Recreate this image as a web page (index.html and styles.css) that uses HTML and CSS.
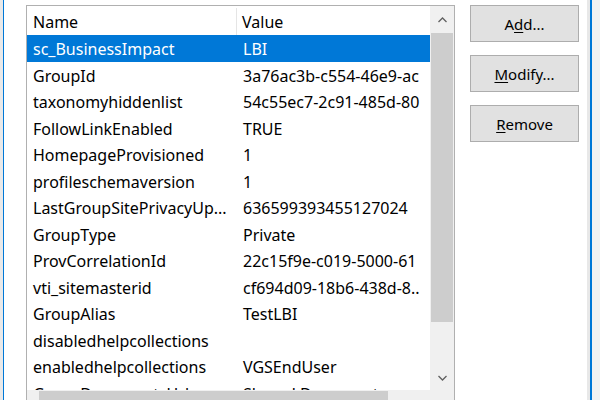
FILE: index.html
```html
<!DOCTYPE html>
<html>
<head>
<meta charset="utf-8">
<link rel="stylesheet" href="styles.css">
</head>
<body>
<div class="window">
  <div class="edge-l"></div>
  <div class="page">
    <div class="listbox">
      <div class="rows">
        <div class="row head"><div class="c-name">Name</div><div class="c-val">Value</div></div>
        <div class="row sel"><div class="c-name">sc_BusinessImpact</div><div class="c-val">LBI</div></div>
        <div class="row"><div class="c-name">GroupId</div><div class="c-val">3a76ac3b-c554-46e9-ac</div></div>
        <div class="row"><div class="c-name">taxonomyhiddenlist</div><div class="c-val">54c55ec7-2c91-485d-80</div></div>
        <div class="row"><div class="c-name">FollowLinkEnabled</div><div class="c-val">TRUE</div></div>
        <div class="row"><div class="c-name">HomepageProvisioned</div><div class="c-val">1</div></div>
        <div class="row"><div class="c-name">profileschemaversion</div><div class="c-val">1</div></div>
        <div class="row"><div class="c-name">LastGroupSitePrivacyUp...</div><div class="c-val">636599393455127024</div></div>
        <div class="row"><div class="c-name">GroupType</div><div class="c-val">Private</div></div>
        <div class="row"><div class="c-name">ProvCorrelationId</div><div class="c-val">22c15f9e-c019-5000-61</div></div>
        <div class="row"><div class="c-name">vti_sitemasterid</div><div class="c-val">cf694d09-18b6-438d-8..</div></div>
        <div class="row"><div class="c-name">GroupAlias</div><div class="c-val">TestLBI</div></div>
        <div class="row"><div class="c-name">disabledhelpcollections</div><div class="c-val"></div></div>
        <div class="row"><div class="c-name">enabledhelpcollections</div><div class="c-val">VGSEndUser</div></div>
        <div class="row"><div class="c-name">GroupDocumentsUrl</div><div class="c-val">Shared Documents</div></div>
      </div>
      <div class="vscroll">
        <div class="sb-btn up"><svg width="9" height="6" viewBox="0 0 9 6"><path d="M0.5 5 L4.5 1 L8.5 5" fill="none" stroke="#606060" stroke-width="1.3"/></svg></div>
        <div class="vthumb"></div>
        <div class="sb-btn down"><svg width="9" height="6" viewBox="0 0 9 6"><path d="M0.5 1 L4.5 5 L8.5 1" fill="none" stroke="#606060" stroke-width="1.3"/></svg></div>
      </div>
      <div class="hscroll">
        <div class="hbtn"></div>
        <div class="hthumb"></div>
      </div>
      <div class="corner"></div>
    </div>
    <div class="buttons">
      <div class="btn">A<u>d</u>d...</div>
      <div class="btn"><u>M</u>odify...</div>
      <div class="btn"><u>R</u>emove</div>
    </div>
  </div>
  <div class="edge-r"></div>
</div>
</body>
</html>
```
FILE: styles.css
```css
html, body {
  margin: 0;
  width: 600px;
  height: 400px;
  overflow: hidden;
  background: #ffffff;
  font-family: "Noto Sans", "Open Sans", sans-serif;
  font-size: 16px;
  color: #000;
}
.window {
  display: flex;
  height: 400px;
}
.edge-l {
  width: 3px;
  background: #e9e9e9;
  border-right: 1px solid #0078d7;
}
.page {
  width: 583px;
  display: flex;
  gap: 15px;
  padding: 5px 0 0 22px;
  box-sizing: border-box;
  background: #fff;
}
.edge-r {
  width: 13px;
  background: linear-gradient(to right, #e8e8e8 0 3px, #0078d7 3px 5px, #f2f2f2 5px);
}
.listbox {
  width: 427px;
  height: 408px;
  border: 1px solid #b0b0b0;
  display: grid;
  grid-template-columns: 403px 24px;
  grid-template-rows: 384px 24px;
  flex: none;
}
.rows {
  overflow: hidden;
  background: #fff;
}
.row {
  display: flex;
  height: 26.5px;
  box-sizing: border-box;
  padding-top: 2px;
  align-items: center;
  white-space: nowrap;
}
.row.head {
  height: 29px;
}
.c-name {
  width: 210px;
  box-sizing: border-box;
  padding-left: 6px;
  overflow: hidden;
  flex: none;
}
.c-val {
  padding-left: 6px;
  flex: 1;
  min-width: 0;
  overflow: hidden;
}
.head .c-name {
  border-right: 1px solid #e5e5e5;
  height: 100%;
  display: flex;
  align-items: center;
}
.head .c-val {
  padding-left: 5px;
}
.row.sel {
  background: #0078d7;
  color: #fff;
}
.vscroll {
  background: #f0f0f0;
  display: flex;
  flex-direction: column;
}
.sb-btn {
  display: flex;
  align-items: center;
  justify-content: center;
}
.sb-btn.up { height: 27px; }
.sb-btn.down { height: 24px; margin-top: auto; }
.vthumb {
  height: 289px;
  margin: 0 1px;
  background: #cdcdcd;
}
.hscroll {
  background: #f0f0f0;
  display: flex;
}
.hbtn { width: 12px; }
.hthumb { width: 349px; margin: 1px 0; background: #cdcdcd; }
.corner { background: #f0f0f0; }
.buttons {
  display: flex;
  flex-direction: column;
  gap: 13px;
  font-size: 15px;
}
.btn {
  width: 109px;
  height: 37px;
  box-sizing: border-box;
  background: #e1e1e1;
  border: 1px solid #adadad;
  display: flex;
  align-items: center;
  justify-content: center;
}
.btn u {
  text-decoration-thickness: 1px;
  text-underline-offset: 2px;
}
```
